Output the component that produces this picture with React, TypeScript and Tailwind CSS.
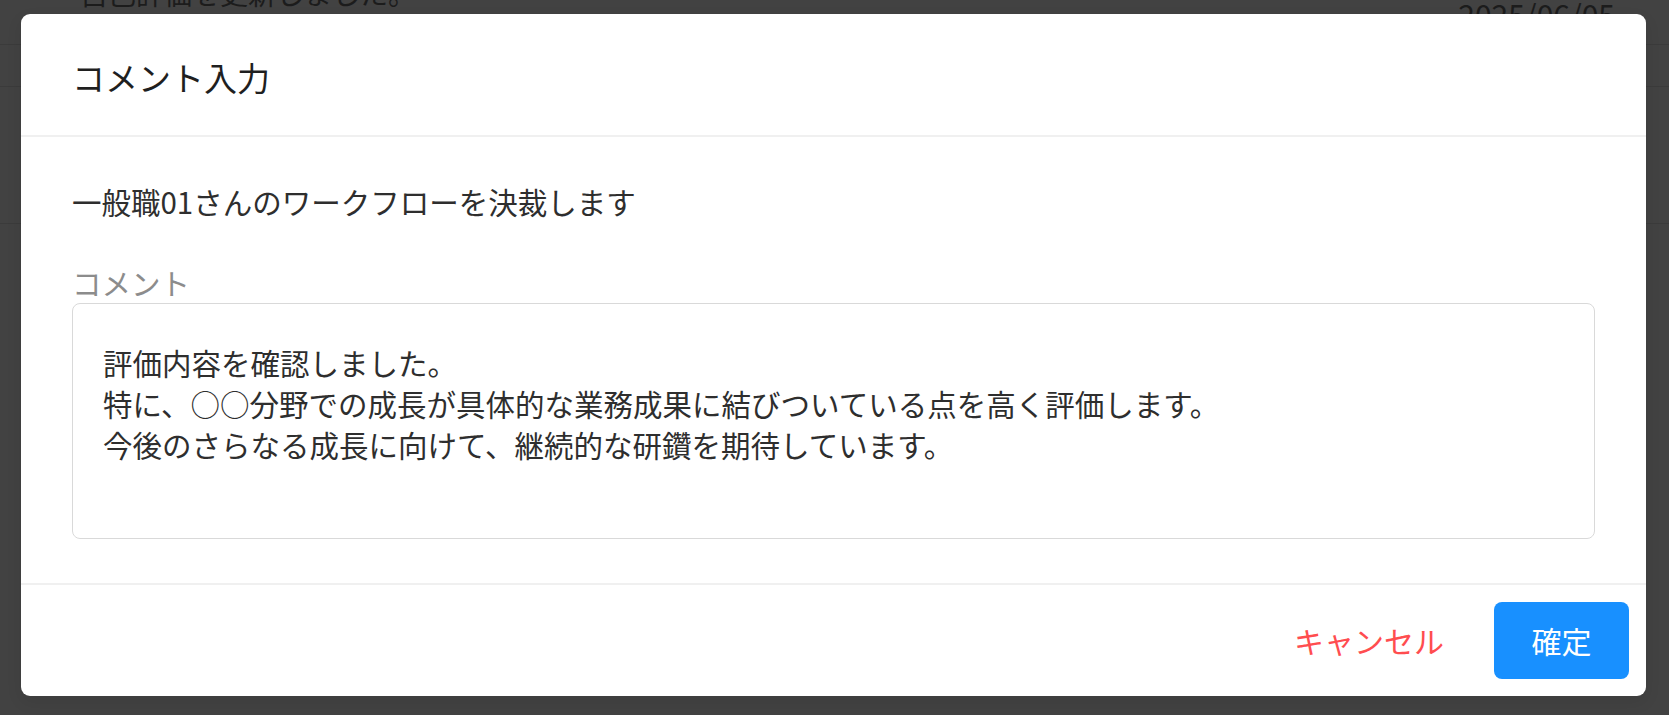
export default function App() {
  return (
    <div
      className="relative h-[715px] w-full overflow-hidden bg-[#424242]"
      style={{ fontFamily: '"Noto Sans CJK JP", "Noto Sans", sans-serif' }}
    >
      {/* ── Page behind the modal ── */}
      <div className="flex h-[45px] items-start justify-between border-b border-[#3b3b3b] pl-[80px] pr-[54px]">
        <span className="-mt-[27px] text-[28px] leading-[40px] text-[#1c1c1c]">自己評価を更新しました。</span>
        <span className="-mt-[6px] text-[30px] leading-[40px] text-[#1c1c1c]">2025/06/05</span>
      </div>
      <div className="h-[42px] border-b border-[#3b3b3b]" />
      <div className="h-[137px] border-b border-[#3b3b3b]" />

      {/* ── Modal ── */}
      <div className="absolute inset-0 flex items-start pl-[21px] pt-[14px]">
        <div className="flex h-[682px] w-[1625px] flex-col overflow-hidden rounded-[9px] bg-white shadow-[0_6px_16px_rgba(0,0,0,0.08)]">
          <div className="h-[123px] shrink-0 border-b-2 border-[#f0f0f0] px-[51px] pt-[40px]">
            <h2 className="text-[33px] font-normal leading-[46px] text-[#1f1f1f]">コメント入力</h2>
          </div>

          <div className="shrink-0 border-b-2 border-[#f0f0f0] px-[51px] pt-[44px] pb-[44px]">
            <p className="text-[29.5px] leading-[41px] text-[#2e2e2e]">一般職01さんのワークフローを決裁します</p>
            <label className="mt-[40px] block text-[29.5px] leading-[41px] text-[#8c8c8c]">コメント</label>
            <textarea
              readOnly
              className="block h-[236px] w-full resize-none rounded-[8px] border border-[#d9d9d9] px-[30px] pt-[38px] text-[29.5px] leading-[41px] text-[#2e2e2e] outline-none"
              defaultValue={
                "評価内容を確認しました。\n特に、○○分野での成長が具体的な業務成果に結びついている点を高く評価します。\n今後のさらなる成長に向けて、継続的な研鑽を期待しています。"
              }
            />
          </div>

          <div className="flex flex-1 items-center justify-end gap-[50px] pr-[17px]">
            <button className="text-[30px] leading-[41px] text-[#ff4d4f]">キャンセル</button>
            <button className="flex h-[77px] w-[135px] items-center justify-center rounded-[8px] bg-[#1890ff] text-[30px] leading-[41px] text-white">
              確定
            </button>
          </div>
        </div>
      </div>
    </div>
  );
}
